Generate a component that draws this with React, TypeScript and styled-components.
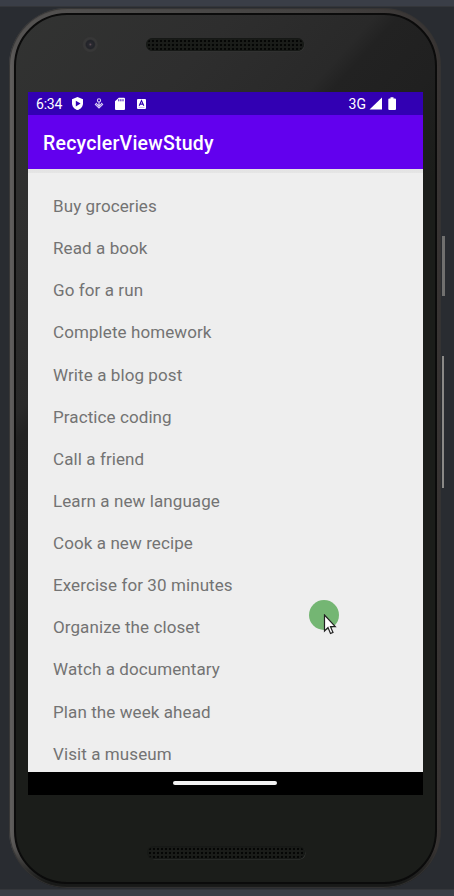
import React from "react";
import styled, { createGlobalStyle } from "styled-components";

const GlobalStyle = createGlobalStyle`
  * { box-sizing: border-box; }
  body { margin: 0; background: #292c31; font-family: Roboto, "Liberation Sans", sans-serif; }
`;

const Desk = styled.div`
  width: 454px;
  height: 896px;
  overflow: hidden;
  display: flex;
  flex-direction: column;
  background: #292c31;
`;

const Strip = styled.div`
  height: 6px;
  flex: none;
  background: #3a3e47;
`;

const Stage = styled.div`
  flex: 1;
  padding: 1px 13px 1px 9px;
  border-top: 1px solid #34363a;
  border-bottom: 1px solid #34363a;
  display: flex;
`;

const Frame = styled.div`
  position: relative;
  flex: 1;
  padding: 5px 4px 4px 5px;
  border-radius: 58px;
  background:
    linear-gradient(180deg, transparent 840px, #191a19 874px),
    linear-gradient(90deg, #676564 0, #555352 6px, #4c4b4a 30%, #444241 70%, #383433 100%);
  box-shadow: inset 0 0 1px 1px #353433;
`;

const Body = styled.div`
  height: 100%;
  border: 2px solid #0b0b0b;
  border-radius: 53px;
  padding: 0 12px;
  display: flex;
  flex-direction: column;
  background: linear-gradient(132deg, #323332 0, #2e2e2e 18%, #292929 30%, #222222 32%, #202020 39%, #1b1d1a 47%);
`;

const Bezel = styled.div<{ $height: number }>`
  height: ${(p) => p.$height}px;
  flex: none;
`;

const TopRow = styled.div`
  display: flex;
  align-items: center;
  padding: 21px 0 0 53px;
`;

const Camera = styled.div`
  width: 17px;
  height: 17px;
  border-radius: 50%;
  background: radial-gradient(circle at 55% 50%, #66505a 0, #292a30 1.5px, #222329 4px, #383838 5.5px, #363636 7px, #303030 8px);
`;

const Speaker = styled.div<{ $left: number; $top?: number }>`
  width: 158px;
  height: 13px;
  margin: ${(p) => p.$top ?? 0}px 0 0 ${(p) => p.$left}px;
  border-radius: 7px;
  background: radial-gradient(circle, #050605 0.9px, #1a1c19 1.6px) 1px 1px / 4px 4px;
  box-shadow: inset 0 0 1px 1px #171917, 1px 1px 0 -0.5px #353735;
`;

const Key = styled.div<{ $top: number; $height: number; $width: number }>`
  position: absolute;
  left: 433px;
  top: ${(p) => p.$top}px;
  width: ${(p) => p.$width}px;
  height: ${(p) => p.$height}px;
  background: ${(p) => (p.$width > 2 ? "#70706f" : "#8a8987")};
`;

const Screen = styled.div`
  position: relative;
  width: 395px;
  height: 703px;
  flex: none;
  display: flex;
  flex-direction: column;
  background: #eeeeee;
  overflow: hidden;
`;

const StatusBar = styled.div`
  height: 23px;
  flex: none;
  padding: 1px 26px 0 8px;
  display: flex;
  align-items: center;
  background: #3200b3;
  color: #fff;
  font-size: 14px;
  line-height: 22px;
`;

const Clock = styled.span`
  width: 26px;
  letter-spacing: -0.2px;
`;

const StatusIcons = styled.div`
  display: flex;
  align-items: center;
  margin-left: 9px;
`;

const Signals = styled.div`
  display: flex;
  align-items: center;
  margin-left: auto;
`;

const AppBar = styled.div`
  height: 54px;
  flex: none;
  padding: 2px 0 0 15px;
  display: flex;
  align-items: center;
  background: #6200ee;
  color: #fff;
  font-size: 19.5px;
  font-weight: 500;
  letter-spacing: 0.22px;
`;

const List = styled.ul`
  flex: 1;
  min-height: 0;
  overflow: hidden;
  margin: 0;
  padding: 16.05px 25px 0;
  list-style: none;
  background: linear-gradient(180deg, #e3e3e3 0, #e5e5e5 4px, #eeeeee 4px);
`;

const Item = styled.li`
  height: 42.14px;
  line-height: 42.4px;
  font-size: 17px;
  letter-spacing: 0.09px;
  color: #737373;
  white-space: nowrap;
`;

const NavBar = styled.div`
  height: 23px;
  flex: none;
  display: flex;
  align-items: center;
  justify-content: center;
  padding: 0 1px 1px 0;
  background: #000;
`;

const Handle = styled.div`
  width: 104px;
  height: 4px;
  border-radius: 2px;
  background: #f2f2f2;
`;

const TouchDot = styled.div`
  position: absolute;
  left: 281px;
  top: 508px;
  width: 30px;
  height: 30px;
  border-radius: 50%;
  background: #74b673;
`;

const Pointer = styled.svg`
  position: absolute;
  left: 295px;
  top: 522px;
`;

const tasks = [
  "Buy groceries",
  "Read a book",
  "Go for a run",
  "Complete homework",
  "Write a blog post",
  "Practice coding",
  "Call a friend",
  "Learn a new language",
  "Cook a new recipe",
  "Exercise for 30 minutes",
  "Organize the closet",
  "Watch a documentary",
  "Plan the week ahead",
  "Visit a museum",
];

const NotificationIcons = () => (
  <StatusIcons>
    <svg width="76" height="14" viewBox="0 0 76 14">
      <path d="M6.500 .1 12 2.300V6.300C12 9.600 9.700 12.300 6.500 13.100 3.300 12.300 1 9.600 1 6.300V2.300Z" fill="#fff" />
      <path d="M4.800 3.700 9.600 6.600 4.800 9.500Z" fill="#3200b3" />
      <g fill="none" stroke="#d8cdf6" strokeWidth="1.100">
        <circle cx="28" cy="3.400" r="1.600" />
        <path d="M28 5V9M26 7.200 28 9.200 30 7.200M25.900 6 24.400 7.600 28 11 31.600 7.600 30.100 6" />
      </g>
      <path d="M47.800 .8H53Q54 .8 54 1.800V12Q54 13 53 13H45Q44 13 44 12V4.300Z" fill="#fff" />
      <path d="M47.800 2.200V4.300M49.900 2.200V4.300M52 2.200V4.300" stroke="#3200b3" strokeWidth="1" />
      <rect x="66" y="2" width="9" height="10" rx="1" fill="#fff" />
      <path d="M68.200 8.700 70.500 3.600 72.800 8.700M69 7.100H72" fill="none" stroke="#3200b3" strokeWidth="1.100" />
      <path d="M67.500 10.400H73.500" stroke="#b7a3ea" strokeWidth=".7" />
    </svg>
  </StatusIcons>
);

const SignalIcons = () => (
  <svg width="31" height="14" viewBox="-1 0 31 14">
    <path d="M2.500 12.600 15 .5V12.600Z" fill="#fff" />
    <path d="M23.500 .2H26.500V1.500H28Q29 1.500 29 2.500V12Q29 13 28 13H22.300Q21.300 13 21.300 12V2.500Q21.300 1.500 22.300 1.500H23.500Z" fill="#fff" />
  </svg>
);

export default function App() {
  return (
    <>
      <GlobalStyle />
      <Desk>
        <Strip />
        <Stage>
          <Frame>
            <Body>
              <Bezel $height={77}>
                <TopRow>
                  <Camera />
                  <Speaker $left={48} />
                </TopRow>
              </Bezel>
              <Screen>
                <StatusBar>
                  <Clock>6:34</Clock>
                  <NotificationIcons />
                  <Signals>
                    <span>3G</span>
                    <SignalIcons />
                  </Signals>
                </StatusBar>
                <AppBar>RecyclerViewStudy</AppBar>
                <List>
                  {tasks.map((task) => (
                    <Item key={task}>{task}</Item>
                  ))}
                </List>
                <NavBar>
                  <Handle />
                </NavBar>
                <TouchDot />
                <Pointer width="14" height="22" viewBox="0 0 14 22">
                  <path
                    d="M1.500 1V17L5 13.600 7.500 19.500 10 18.400 7.500 12.700H12.300Z"
                    fill="#fff"
                    stroke="#222"
                    strokeWidth="1.200"
                  />
                </Pointer>
              </Screen>
              <Bezel $height={82}>
                <TopRow>
                  <Speaker $left={66} $top={30} />
                </TopRow>
              </Bezel>
            </Body>
            <Key $top={228} $height={60} $width={3} />
            <Key $top={348} $height={132} $width={2} />
          </Frame>
        </Stage>
        <Strip />
      </Desk>
    </>
  );
}
